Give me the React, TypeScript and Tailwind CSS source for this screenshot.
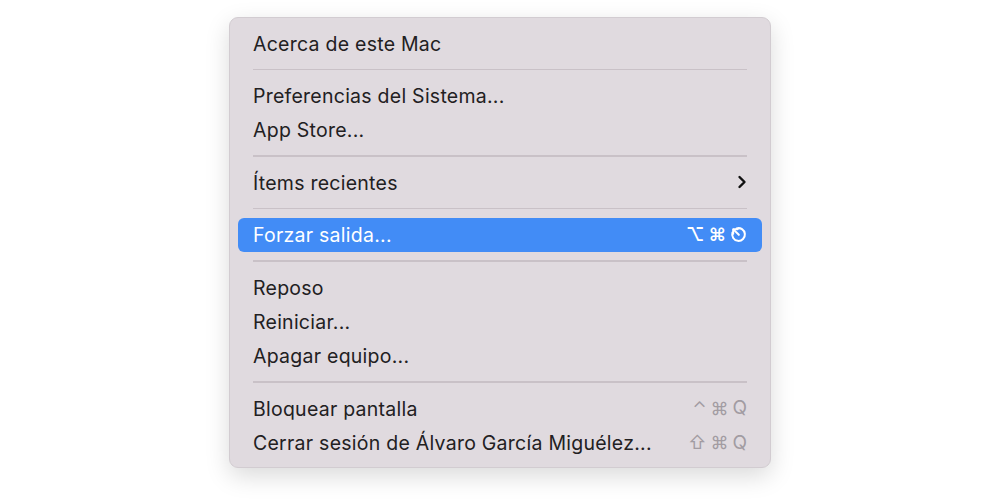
import React from "react";

const font = { fontFamily: "Inter, 'Noto Sans', sans-serif" };

function Esc({ color }: { color: string }) {
  return (
    <svg width="17" height="17" viewBox="0 0 16 16" fill="none" stroke={color} strokeWidth="1.9" strokeLinecap="round" strokeLinejoin="round">
      <path d="M6.2 2.3 A6 6 0 1 1 2.3 6.2" />
      <path d="M8.3 8.3 L3.4 3.4" />
      <path d="M3 7.2 L3 3 L7.2 3" />
    </svg>
  );
}

function Item({ label, shortcut, highlighted, chevron }: { label: string; shortcut?: React.ReactNode; highlighted?: boolean; chevron?: boolean }) {
  return (
    <div className={`mx-[8px] h-[34.3px] flex items-center justify-between pl-[15px] pr-[15px] pt-[2px] rounded-[6px] ${highlighted ? "bg-[#428cf6] text-white" : "text-[#222022]"}`}>
      <span className="text-[19.5px] tracking-[0.25px]">{label}</span>
      {shortcut}
      {chevron && (
        <svg width="12" height="16" viewBox="0 0 12 16" fill="none" stroke="#111" strokeWidth="2.4" strokeLinecap="round" strokeLinejoin="round" className="mr-[-1px] mt-[-2px]">
          <path d="M3.5 3 L8.5 8 L3.5 13" />
        </svg>
      )}
    </div>
  );
}

function Sep() {
  return (
    <div className="h-[18.2px] flex items-center px-[23px]">
      <div className="h-[1.5px] w-full bg-[#c9c1c7]" />
    </div>
  );
}

function Keys({ children, color }: { children: React.ReactNode; color: string }) {
  return (
    <span className="flex items-center gap-[4px] text-[19px] mt-[-2px]" style={{ color }}>
      {children}
    </span>
  );
}

export default function App() {
  const gray = "#a29ca2";
  return (
    <div className="w-[1000px] h-[500px] bg-white flex justify-center pt-[17px]" style={font}>
      <div className="w-[542px] h-[451px] bg-[#e0dadf] rounded-[9px] border border-[#d2ccd1] shadow-[0_8px_24px_rgba(0,0,0,0.15)] pt-[8px] pb-[7px]">
        <Item label="Acerca de este Mac" />
        <Sep />
        <Item label="Preferencias del Sistema..." />
        <Item label="App Store..." />
        <Sep />
        <Item label="Ítems recientes" chevron />
        <Sep />
        <Item
          label="Forzar salida..."
          highlighted
          shortcut={
            <Keys color="#ffffff">
              <span className="text-[18px] font-semibold">⌥</span>
              <span className="text-[18px] font-semibold">⌘</span>
              <Esc color="#ffffff" />
            </Keys>
          }
        />
        <Sep />
        <Item label="Reposo" />
        <Item label="Reiniciar..." />
        <Item label="Apagar equipo..." />
        <Sep />
        <Item
          label="Bloquear pantalla"
          shortcut={
            <Keys color={gray}>
              <span className="text-[18px]">⌃</span>
              <span className="text-[18px]">⌘</span>
              <span>Q</span>
            </Keys>
          }
        />
        <Item
          label="Cerrar sesión de Álvaro García Miguélez..."
          shortcut={
            <Keys color={gray}>
              <span className="text-[18px]">⇧</span>
              <span className="text-[18px]">⌘</span>
              <span>Q</span>
            </Keys>
          }
        />
      </div>
    </div>
  );
}
